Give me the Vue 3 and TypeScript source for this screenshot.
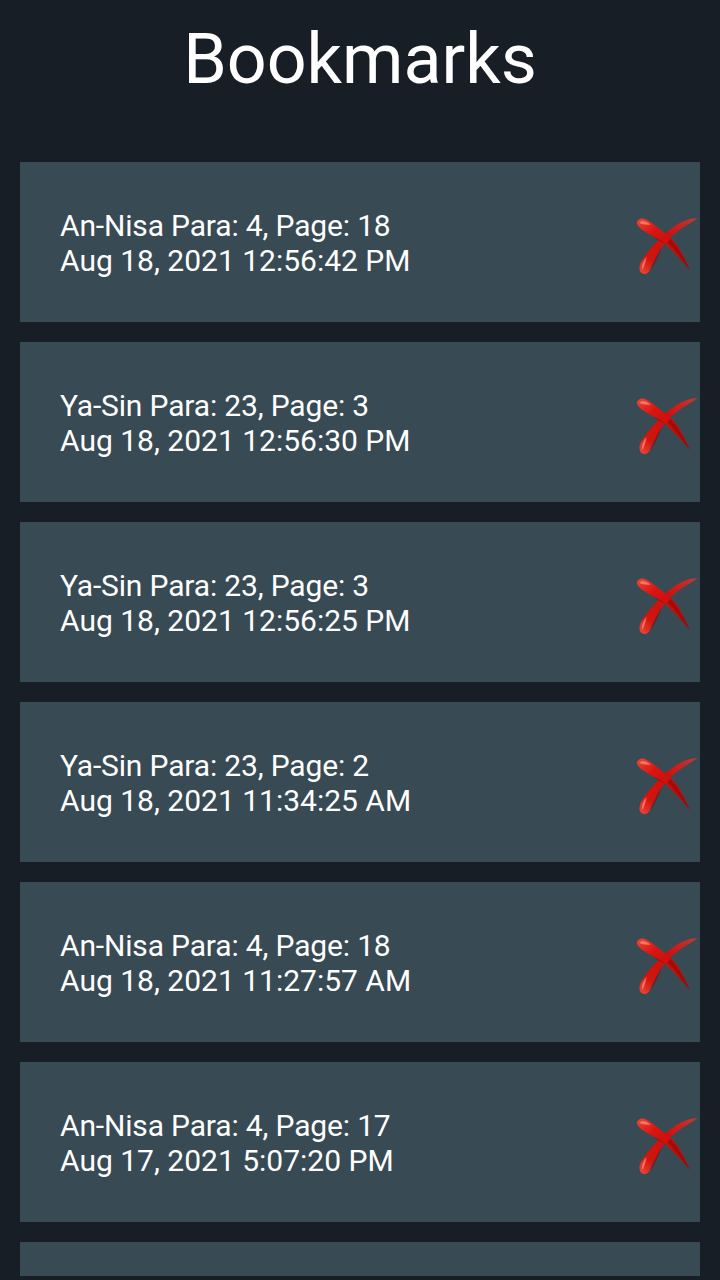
<script setup lang="ts">
interface Bookmark {
  title: string
  date: string
}
const bookmarks: Bookmark[] = [
  { title: 'An-Nisa Para: 4, Page: 18', date: 'Aug 18, 2021 12:56:42 PM' },
  { title: 'Ya-Sin Para: 23, Page: 3', date: 'Aug 18, 2021 12:56:30 PM' },
  { title: 'Ya-Sin Para: 23, Page: 3', date: 'Aug 18, 2021 12:56:25 PM' },
  { title: 'Ya-Sin Para: 23, Page: 2', date: 'Aug 18, 2021 11:34:25 AM' },
  { title: 'An-Nisa Para: 4, Page: 18', date: 'Aug 18, 2021 11:27:57 AM' },
  { title: 'An-Nisa Para: 4, Page: 17', date: 'Aug 17, 2021 5:07:20 PM' },
]
</script>

<template>
  <div class="page">
    <h1 class="title">Bookmarks</h1>
    <ul class="list">
      <li v-for="(b, i) in bookmarks" :key="i" class="card">
        <div class="text">
          <div class="line-title">{{ b.title }}</div>
          <div>{{ b.date }}</div>
        </div>
        <svg class="del" viewBox="48 18 192 216" width="64" height="72">
          <defs>
            <linearGradient :id="`a${i}`" gradientUnits="userSpaceOnUse" x1="60" y1="50" x2="200" y2="200">
              <stop offset="0" stop-color="#ec4434" />
              <stop offset="0.3" stop-color="#d81410" />
              <stop offset="0.7" stop-color="#c40e0a" />
              <stop offset="1" stop-color="#9c100c" />
            </linearGradient>
            <linearGradient :id="`b${i}`" gradientUnits="userSpaceOnUse" x1="230" y1="55" x2="65" y2="222">
              <stop offset="0" stop-color="#c03a34" />
              <stop offset="0.4" stop-color="#d01010" />
              <stop offset="0.8" stop-color="#d0140e" />
              <stop offset="1" stop-color="#ec4638" />
            </linearGradient>
          </defs>
          <path
            :fill="`url(#a${i})`"
            d="M50 68C54 58 62 54 72 56C88 60 112 82 135 100C150 112 162 122 172 136C186 158 200 186 210 210C192 190 168 162 142 138C128 126 112 116 98 109C82 100 68 92 58 82C54 78 51 72 50 68Z"
          />
          <path
            :fill="`url(#b${i})`"
            d="M233 54C215 55 192 60 168 76C150 88 132 102 116 120C98 138 78 160 66 180C58 192 56 208 62 217C70 226 83 223 89 212C97 198 107 172 123 146C133 130 150 112 170 96C190 80 214 68 233 54Z"
          />
          <path
            fill="#ff8c7c"
            opacity="0.7"
            d="M58 68C66 60 78 62 92 74C80 74 66 74 58 68ZM67 210C63 198 68 184 80 170C77 184 74 198 67 210Z"
          />
          <path
            fill="#7c0806"
            opacity="0.5"
            d="M150 116C166 130 184 162 206 206C186 174 166 148 142 128ZM89 212C99 192 109 166 125 142C115 168 105 196 89 212ZM98 109C112 116 126 122 138 132C124 126 110 118 98 109Z"
          />
        </svg>
      </li>
      <li class="card card-cut"></li>
    </ul>
  </div>
</template>

<style scoped>
.page {
  width: 720px;
  height: 1280px;
  box-sizing: border-box;
  overflow: hidden;
  background: #181e25;
  padding: 0 20px;
  font-family: Roboto, sans-serif;
  color: #fff;
}
.title {
  margin: 0;
  height: 162px;
  padding-top: 23px;
  box-sizing: border-box;
  text-align: center;
  font-size: 70px;
  line-height: 72px;
  font-weight: 400;
}
.list {
  list-style: none;
  margin: 0;
  padding: 0;
  display: flex;
  flex-direction: column;
  gap: 20px;
}
.card {
  height: 160px;
  background: #384a53;
  display: flex;
  align-items: center;
  justify-content: space-between;
  padding-left: 40px;
  box-sizing: border-box;
}
.card-cut {
  height: 34px;
}
.text {
  font-size: 30px;
  line-height: 35px;
  padding-top: 2px;
}
.line-title {
  letter-spacing: -0.16px;
}
.del {
  display: block;
  flex: none;
}
</style>

<style>
html, body {
  background: #181e25;
}
</style>
